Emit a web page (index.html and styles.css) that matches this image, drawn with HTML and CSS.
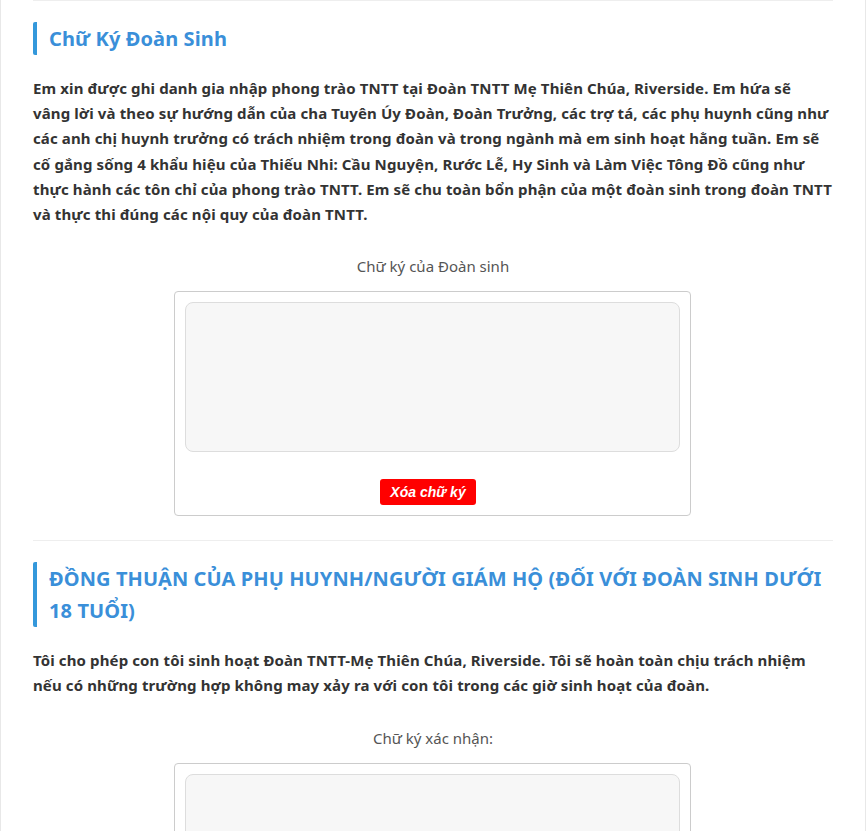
FILE: index.html
```html
<!DOCTYPE html>
<html lang="vi">
<head>
<meta charset="utf-8">
<title>Chữ Ký Đoàn Sinh</title>
<link rel="stylesheet" href="styles.css">
</head>
<body>
<div class="page">
  <section class="block">
    <h2 class="title">Chữ Ký Đoàn Sinh</h2>
    <p class="pledge">Em xin được ghi danh gia nhập phong trào TNTT tại Đoàn TNTT Mẹ Thiên Chúa, Riverside. Em hứa sẽ<br>vâng lời và theo sự hướng dẫn của cha Tuyên Úy Đoàn, Đoàn Trưởng, các trợ tá, các phụ huynh cũng như các anh chị huynh trưởng có trách nhiệm trong đoàn và trong ngành mà em sinh hoạt hằng tuần. Em sẽ cố gắng sống 4 khẩu hiệu của Thiếu Nhi: Cầu Nguyện, Rước Lễ, Hy Sinh và Làm Việc Tông Đồ cũng như thực hành các tôn chỉ của phong trào TNTT. Em sẽ chu toàn bổn phận của một đoàn sinh trong đoàn TNTT và thực thi đúng các nội quy của đoàn TNTT.</p>
    <div class="sig">
      <div class="sig-label">Chữ ký của Đoàn sinh</div>
      <div class="sig-box">
        <div class="sig-pad"></div>
        <div class="sig-actions"><button class="btn-clear" type="button">Xóa chữ ký</button></div>
      </div>
    </div>
  </section>
  <section class="block">
    <h2 class="title">ĐỒNG THUẬN CỦA PHỤ HUYNH/NGƯỜI GIÁM HỘ (ĐỐI VỚI ĐOÀN SINH DƯỚI 18 TUỔI)</h2>
    <p class="pledge">Tôi cho phép con tôi sinh hoạt Đoàn TNTT-Mẹ Thiên Chúa, Riverside. Tôi sẽ hoàn toàn chịu trách nhiệm nếu có những trường hợp không may xảy ra với con tôi trong các giờ sinh hoạt của đoàn.</p>
    <div class="sig">
      <div class="sig-label">Chữ ký xác nhận:</div>
      <div class="sig-box">
        <div class="sig-pad"></div>
        <div class="sig-actions"><button class="btn-clear" type="button">Xóa chữ ký</button></div>
      </div>
    </div>
  </section>
</div>
</body>
</html>
```

FILE: styles.css
```css
* { box-sizing: border-box; }

html, body {
  margin: 0;
  padding: 0;
  background: #ffffff;
}

body {
  font-family: "Noto Sans", "Open Sans", "DejaVu Sans", sans-serif;
  color: #333333;
}

.page {
  width: 866px;
  border-left: 1px solid #e8e8e8;
  border-right: 1px solid #e8e8e8;
  padding: 0 32px;
}

.block {
  border-top: 1px solid #eeeeee;
  padding: 21px 0 24px;
}

.title {
  margin: 0 0 21px;
  padding: 1px 0 0 12px;
  border-left: 4px solid #3498db;
  border-radius: 2px 0 0 2px;
  color: #3a8fd9;
  font-size: 20px;
  font-weight: 700;
  line-height: 32px;
  letter-spacing: 0.1px;
}

.pledge {
  margin: 0 0 27px;
  font-size: 15px;
  font-weight: 700;
  line-height: 25.2px;
  letter-spacing: 0.12px;
  color: #333333;
}

.sig {
  display: flex;
  flex-direction: column;
  align-items: center;
}

.sig-label {
  font-size: 15px;
  line-height: 25px;
  color: #555555;
  margin-bottom: 12px;
}

.sig-box {
  width: 517px;
  margin-right: 1px;
  border: 1px solid #cccccc;
  border-radius: 4px;
  padding: 10px;
  display: flex;
  flex-direction: column;
}

.sig-pad {
  height: 150px;
  background: #f7f7f7;
  border: 1px solid #dddddd;
  border-radius: 8px;
}

.sig-actions {
  display: flex;
  justify-content: center;
  margin-top: 27px;
  padding-right: 9px;
}

.btn-clear {
  height: 26px;
  padding: 0 10px;
  border: none;
  border-radius: 3px;
  background: #ff0000;
  color: #ffffff;
  font-family: "Liberation Sans", Arial, sans-serif;
  font-size: 14px;
  font-weight: 700;
  font-style: italic;
  cursor: pointer;
}
```
